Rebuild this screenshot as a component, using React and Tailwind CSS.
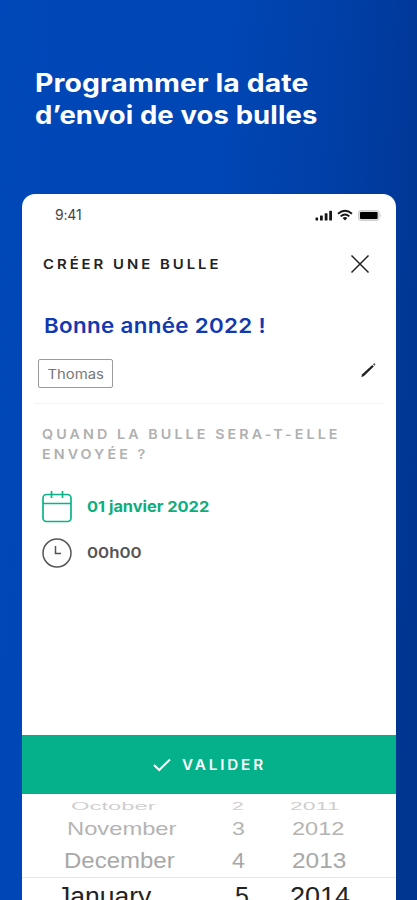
function PickerRow({ month, day, year, row, pad, m, d, y }) {
  return (
    <div className={"flex items-center whitespace-nowrap " + row}>
      <div className={"shrink-0 " + pad}>
        <span className={"inline-block origin-left " + m}>{month}</span>
      </div>
      <div className="w-[60px] shrink-0">
        <span className={"inline-block origin-left " + d}>{day}</span>
      </div>
      <div className="shrink-0">
        <span className={"inline-block origin-left " + y}>{year}</span>
      </div>
    </div>
  );
}

function StatusIcons() {
  return (
    <svg width="68" height="14" viewBox="0 0 68 14" className="block">
      <g fill="#161616">
        <rect x="0.5" y="8.5" width="2.6" height="3" rx="0.6" />
        <rect x="5" y="6.5" width="2.8" height="5" rx="0.6" />
        <rect x="9.7" y="4.2" width="2.8" height="7.3" rx="0.6" />
        <rect x="14.2" y="1.8" width="2.8" height="9.7" rx="0.6" />
      </g>
      <g fill="none" stroke="#161616" strokeWidth="1.8">
        <path d="M23 4.7 Q30 -1.1 37 4.7" />
        <path d="M25.6 7.4 Q30 3.5 34.4 7.4" />
      </g>
      <path d="M27.6 9 Q30 7.2 32.4 9 L30 11.5 Z" fill="#161616" />
      <rect x="43.5" y="1.5" width="20.6" height="10" rx="2.4" fill="#ddd" stroke="#d0d0d0" />
      <rect x="45" y="3" width="17.6" height="7" rx="1" fill="#000" />
      <path d="M65.5 5 Q67.2 6.5 65.5 8 Z" fill="#b5b5b5" />
    </svg>
  );
}

const rows = [
  {
    month: "October", day: "2", year: "2011",
    row: "h-[24px] text-[20px] text-[#cfcfcf]", pad: "w-[210px] pl-[49px]",
    m: "scale-x-[1.19] scale-y-[0.55]", d: "scale-x-[1.05] scale-y-[0.55]", y: "-translate-x-[2px] scale-x-[1.15] scale-y-[0.55]",
  },
  {
    month: "November", day: "3", year: "2012",
    row: "h-[22px] text-[21px] text-[#b4b4b4]", pad: "w-[210px] pl-[45px]",
    m: "scale-x-[1.13] scale-y-[0.9]", d: "scale-x-[1.1] scale-y-[0.9]", y: "scale-x-[1.12] scale-y-[0.9]",
  },
  {
    month: "December", day: "4", year: "2013",
    row: "h-[40px] text-[22px] text-[#a8a8a8]", pad: "w-[210px] pl-[42px]",
    m: "scale-x-[1.09]", d: "scale-x-[1.05]", y: "scale-x-[1.11]",
  },
];

export default function App() {
  return (
    <main className="flex h-[900px] w-[417px] flex-col overflow-hidden bg-[linear-gradient(94deg,#0047b7_0%,#0046b5_48%,#003ea4_75%,#003590_96%)] font-['Inter',sans-serif]">
      <h1 className="h-[194px] shrink-0 pl-[35px] pt-[67px] text-[25px] font-bold leading-[32px] text-white">
        <span className="block origin-left scale-x-[1.135] whitespace-nowrap tracking-[0.1px]">Programmer la date</span>
        <span className="block origin-left scale-x-[1.1] whitespace-nowrap tracking-[0.1px]">d’envoi de vos bulles</span>
      </h1>
      <section className="ml-[22px] flex h-[706px] w-[374px] shrink-0 flex-col overflow-hidden rounded-t-[13px] bg-white">
        <div className="flex h-[40px] shrink-0 items-center justify-between pl-[33px] pr-[13px]">
          <span className="text-[14px] tracking-[-0.2px] text-[#444]">9:41</span>
          <div className="pt-[4px]"><StatusIcons /></div>
        </div>
        <header className="flex h-[60px] shrink-0 items-center justify-between pl-[21px] pr-[26px]">
          <h2 className="origin-left scale-x-[1.145] whitespace-nowrap pt-px text-[13px] font-semibold tracking-[2.6px] text-[#222]">CRÉER UNE BULLE</h2>
          <svg width="20" height="20" viewBox="0 0 20 20" className="block">
            <path d="M1.5 1.5 L18.5 18.5 M18.5 1.5 L1.5 18.5" stroke="#222" strokeWidth="1.5" />
          </svg>
        </header>
        <h3 className="h-[65px] shrink-0 pl-[22px] pt-[17px] text-[20.5px] font-semibold leading-[30px] tracking-[0.3px] text-[#1239b0]">
          <span className="inline-block origin-left scale-x-[1.09] whitespace-nowrap">Bonne année 2022 !</span>
        </h3>
        <div className="ml-[12px] flex h-[45px] w-[350px] shrink-0 items-start justify-between border-b border-[#f3f3f3] pl-[4px] pr-[7px]">
          <span className="flex h-[29px] w-[75px] items-center justify-center rounded-[2px] border border-[#9b9b9b] pl-px pt-px text-[13.5px] text-[#777]">
            <span className="inline-block scale-x-[1.1]">Thomas</span>
          </span>
          <svg width="18" height="18" viewBox="0 0 18 18" className="mt-[2px] block">
            <path d="M2.2 16.2 L3.2 13.3 L13.2 3.9 L14.8 5.5 L5 15 Z" fill="#222" />
            <path d="M13.9 3.2 L14.7 2.4 Q15.3 2 15.9 2.6 Q16.6 3.2 16.1 3.9 L15.4 4.8 Z" fill="#555" />
          </svg>
        </div>
        <p className="h-[80px] shrink-0 pl-[20px] pt-[20px] text-[13px] font-semibold leading-[20px] tracking-[2.8px] text-[#b0b0b0]">
          <span className="block origin-left scale-x-[1.1] whitespace-nowrap">QUAND LA BULLE SERA-T-ELLE</span>
          <span className="block origin-left scale-x-[1.1] whitespace-nowrap">ENVOYÉE ?</span>
        </p>
        <div className="flex h-[46px] shrink-0 items-center gap-[15px] pl-[20px]">
          <svg width="30" height="34" viewBox="0 0 30 34" fill="none" stroke="#0bb587" strokeWidth="1.7" className="block">
            <rect x="1" y="4.5" width="28" height="27" rx="3.5" />
            <path d="M1 13.5 H29 M9.5 1 V8 M20.5 1 V8" />
          </svg>
          <span className="origin-left scale-x-[1.09] whitespace-nowrap text-[15px] font-bold text-[#0bae7d]">01 janvier 2022</span>
        </div>
        <div className="flex h-[46px] shrink-0 items-center gap-[15px] pl-[20px]">
          <svg width="30" height="30" viewBox="0 0 30 30" fill="none" stroke="#555" strokeWidth="1.5" className="block">
            <circle cx="15" cy="15" r="14" />
            <path d="M13.5 8 V15.5 H19" />
          </svg>
          <span className="origin-left scale-x-[1.12] whitespace-nowrap pt-px text-[15px] font-semibold text-[#555]">00h00</span>
        </div>
        <button className="mt-[159px] flex h-[59px] shrink-0 items-center gap-[11px] bg-[#05b18a] pl-[131px] text-white">
          <svg width="18" height="14" viewBox="0 0 18 14" className="block">
            <path d="M1 7 L6.2 12 L17 1.5" fill="none" stroke="#fff" strokeWidth="2" />
          </svg>
          <span className="origin-left scale-x-[1.09] text-[14px] font-semibold tracking-[2.6px]">VALIDER</span>
        </button>
        <div className="flex flex-col font-['Liberation_Sans',sans-serif]">
          {rows.map((r) => <PickerRow key={r.month} {...r} />)}
          <div className="-mt-[3px] border-t border-[#e5e5e5]">
            <PickerRow month="January" day="5" year="2014" row="h-[38px] text-[25px] text-[#222]" pad="w-[213px] pl-[35px]" m="scale-x-[1.06]" d="" y="scale-x-[1.08] -translate-x-[5px]" />
          </div>
        </div>
      </section>
    </main>
  );
}
